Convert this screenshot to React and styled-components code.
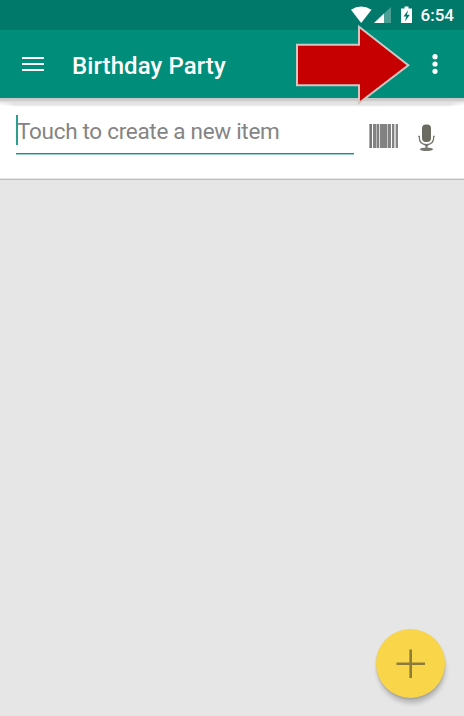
import React from 'react';
import styled, { createGlobalStyle } from 'styled-components';

const GlobalStyle = createGlobalStyle`
  * { box-sizing: border-box; }
  body { margin: 0; font-family: Roboto, sans-serif; background: #e6e6e6; }
  svg { display: block; flex: none; }
`;

const Screen = styled.main`
  position: relative;
  display: flex;
  flex-direction: column;
  width: 464px;
  height: 716px;
  overflow: hidden;
  background: #e6e6e6;
`;

const StatusBar = styled.div`
  display: flex;
  flex: none;
  align-items: center;
  justify-content: flex-end;
  height: 30px;
  padding-right: 10px;
  background: #00796a;
`;

const StatusIcons = styled.svg`
  margin-right: 8px;
`;

const Clock = styled.time`
  color: #fff;
  font-size: 17px;
  font-weight: 500;
  line-height: 30px;
`;

const AppBar = styled.header`
  display: flex;
  flex: none;
  align-items: center;
  height: 68px;
  padding: 0 26px 0 22px;
  background: #008e7b;
`;

const IconButton = styled.button`
  padding: 0;
  border: 0;
  background: none;
`;

const Title = styled.h1`
  flex: 1;
  margin: 3px 0 0 28px;
  color: #fff;
  font-size: 24px;
  font-weight: 500;
  letter-spacing: 0.08px;
  line-height: 30px;
  white-space: nowrap;
`;

const EntryRow = styled.section`
  display: flex;
  flex: none;
  align-items: flex-start;
  height: 82px;
  padding: 17px 28px 0 16px;
  background:
    radial-gradient(ellipse 18px 7px at 0 8px, #fff 30%, transparent) 0 2px / 18px 9px no-repeat,
    radial-gradient(ellipse 18px 7px at 18px 8px, #fff 30%, transparent) 100% 2px / 18px 9px no-repeat,
    linear-gradient(#c9c9c9 0 2px, #d5d5d5 3px, #e3e3e3 4px 7px, #f5f5f5 8px, #fff 9px);
  border-bottom: 1px solid #bdbdbd;
  box-shadow: inset 0 -1px #e6e6e6;
`;

const Field = styled.div`
  display: flex;
  flex: none;
  width: 338px;
  height: 40px;
  border-bottom: 1px solid #9bd3cb;
  box-shadow: inset 0 -1px #328475;
`;

const Caret = styled.span`
  width: 2px;
  height: 30px;
  margin-right: -1px;
  background: #2b9e8f;
`;

const Placeholder = styled.span`
  color: #848484;
  font-size: 22.5px;
  letter-spacing: -0.3px;
  line-height: 26px;
  padding-top: 3px;
  white-space: nowrap;
`;

const EntryActions = styled.div`
  display: flex;
  align-items: flex-start;
  gap: 19px;
  margin: 9px 0 0 15px;
`;

const AddButton = styled.button`
  position: absolute;
  right: 19px;
  bottom: 18px;
  display: flex;
  align-items: center;
  justify-content: center;
  width: 69px;
  height: 69px;
  padding: 0;
  border: 0;
  border-radius: 50%;
  background: #f8d549;
  box-shadow: 1px 6px 5px -1px rgba(0, 0, 0, 0.22), 0 1px 2px rgba(0, 0, 0, 0.14);
`;

const Pointer = styled.svg`
  position: absolute;
  left: 292px;
  top: 20px;
`;

const bars = [
  [0, 1, '#aaa'], [1, 2, '#777'], [4, 3, '#828282'], [7, 1, '#bbb'],
  [8, 2, '#808080'], [10, 1, '#ddd'], [11, 1, '#888'], [12, 6, '#828282'],
  [18, 1, '#c8c8c8'], [19, 3, '#828282'], [23, 2, '#828282'],
  [25, 2, '#d0d0d0'], [27, 2, '#858585'],
];

const Barcode = () => (
  <svg width="29" height="24" viewBox="0 0 29 24" shapeRendering="crispEdges">
    {bars.map(([x, w, fill]) => <rect key={x} x={x} width={w} height="24" fill={fill} />)}
  </svg>
);

const Microphone = () => (
  <svg width="19" height="27" viewBox="0 0 19 27">
    <rect x="5" y="0.5" width="9" height="17.5" rx="4" fill="#6b6b61" />
    <path d="M1.3 12.3H2.3V13.5C2.3 18 5 20.6 9.5 20.6S16.7 18 16.7 13.5V12.3H17.7" fill="none" stroke="#777771" strokeWidth="1.3" />
    <path d="M6.5 20.4H12.5L10.5 22.2V24H8.5V22.2Z" fill="#777" />
    <ellipse cx="9.5" cy="25.2" rx="6.5" ry="1.7" fill="#777771" />
  </svg>
);

export default function App() {
  return (
    <>
      <GlobalStyle />
      <Screen>
        <StatusBar>
          <StatusIcons width="64" height="30" viewBox="349 0 64 30">
            <path d="M351 9.8Q361 3 371.5 9.8L361.2 23Z" fill="#fff" />
            <path d="M391 7V23H374Z" fill="#4c9f94" />
            <path d="M384 13.5V23H374Z" fill="#fff" />
            <path d="M404.5 6.5H408.5V8.5H412V23H401V8.5H404.5Z" fill="#fff" />
            <path d="M408.2 10L403.5 16.5H406.2L405 21.5L409.8 14.7H406.9Z" fill="#00796a" />
          </StatusIcons>
          <Clock>6:54</Clock>
        </StatusBar>
        <AppBar>
          <IconButton aria-label="Menu">
            <svg width="22" height="14" viewBox="0 0 22 14" fill="#fff" shapeRendering="crispEdges">
              <rect width="22" height="2" />
              <rect y="6" width="22" height="2" />
              <rect y="12" width="22" height="2" />
            </svg>
          </IconButton>
          <Title>Birthday Party</Title>
          <IconButton aria-label="More options">
            <svg width="6" height="22" viewBox="0 0 6 22" fill="#fff">
              <circle cx="3" cy="3.7" r="2.6" />
              <circle cx="3" cy="11" r="2.6" />
              <circle cx="3" cy="18.3" r="2.6" />
            </svg>
          </IconButton>
        </AppBar>
        <EntryRow>
          <Field>
            <Caret />
            <Placeholder>Touch to create a new item</Placeholder>
          </Field>
          <EntryActions>
            <IconButton aria-label="Scan barcode"><Barcode /></IconButton>
            <IconButton aria-label="Speak item"><Microphone /></IconButton>
          </EntryActions>
        </EntryRow>
        <AddButton aria-label="Add item">
          <svg width="30" height="30" viewBox="0 0 30 30">
            <path d="M0.5 14.7H29M14.7 0.5V29" stroke="#8d7b38" strokeWidth="2.6" />
          </svg>
        </AddButton>
        <Pointer width="120" height="90" viewBox="292 20 120 90">
          <path d="M297 44.8H359V26.7L408.3 65.2L359 103V85.3H297Z" fill="#c60000" stroke="#cfc8c5" strokeWidth="2" />
        </Pointer>
      </Screen>
    </>
  );
}
